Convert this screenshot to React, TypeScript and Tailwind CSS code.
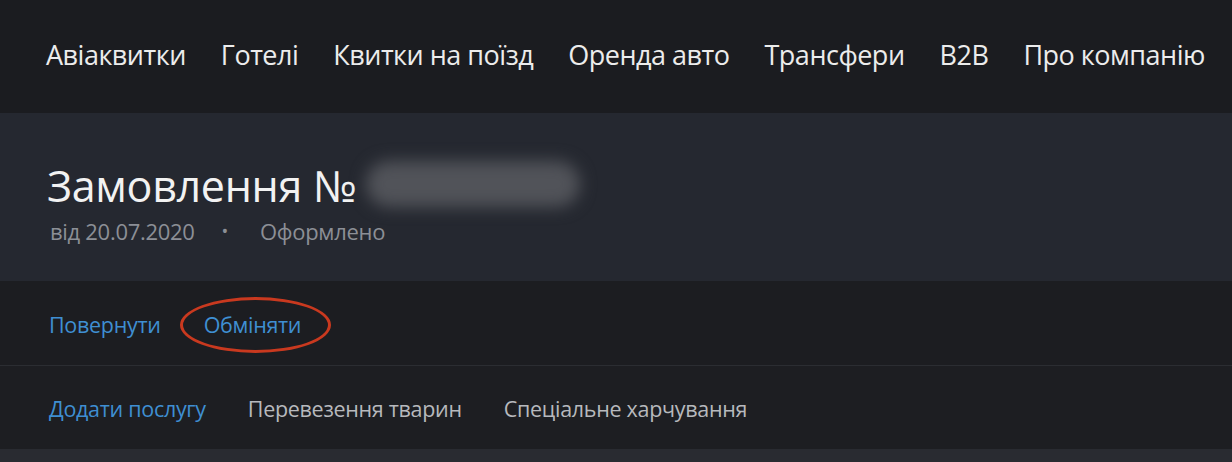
import React from "react";

const NAV = ["Авіаквитки", "Готелі", "Квитки на поїзд", "Оренда авто", "Трансфери", "B2B", "Про компанію"];

export default function App() {
  return (
    <div className="w-[1232px] h-[462px] overflow-hidden bg-[#1c1d21] font-['Open_Sans',sans-serif]">
      {/* Top nav */}
      <nav className="h-[113px] bg-[#1b1c20] flex items-center pl-[46px] gap-[35px]">
        {NAV.map((item) => (
          <span key={item} className="text-[27px] text-[#ececec] tracking-[-0.5px] leading-none pb-[4px]">
            {item}
          </span>
        ))}
      </nav>

      {/* Order header */}
      <header className="h-[168px] bg-[#252830] pl-[47px] pt-[45px]">
        <div className="flex items-center h-[56px]">
          <h1 className="text-[43px] text-[#f2f2f2] leading-[56px] tracking-[-0.3px]">Замовлення №</h1>
          {/* hidden order number */}
          <div className="ml-[10px] mt-[-4px] w-[214px] h-[46px] rounded-full bg-[#515359] blur-[8px]" />
        </div>
        <div className="flex items-center mt-[3px] text-[22px] leading-[28px] text-[#8c8f96] tracking-[-0.3px]">
          <span className="pl-[3px]">від 20.07.2020</span>
          <span className="ml-[27px] text-[18px]">•</span>
          <span className="ml-[32px]">Оформлено</span>
        </div>
      </header>

      {/* Actions */}
      <div className="h-[85px] flex items-center pl-[49px] pt-[4px] gap-[43px] border-b border-[#2b2d32] text-[21.5px] tracking-[-0.3px]">
        <a className="text-[#3f8fd2]">Повернути</a>
        <div className="relative">
          <a className="text-[#3f8fd2]">Обміняти</a>
          <div className="absolute left-[-24px] top-[-12px] w-[151px] h-[56px] rounded-[50%] border-[3px] border-[#c9391f]" />
        </div>
      </div>

      {/* Services */}
      <div className="h-[83px] bg-[#1d1e22] flex items-center pl-[49px] pt-[4px] gap-[42px] text-[21.5px] tracking-[-0.3px]">
        <a className="text-[#3f8fd2]">Додати послугу</a>
        <span className="text-[#b7b9bd]">Перевезення тварин</span>
        <span className="text-[#b7b9bd]">Спеціальне харчування</span>
      </div>

      <div className="h-[13px] bg-[#292b31]" />
    </div>
  );
}
